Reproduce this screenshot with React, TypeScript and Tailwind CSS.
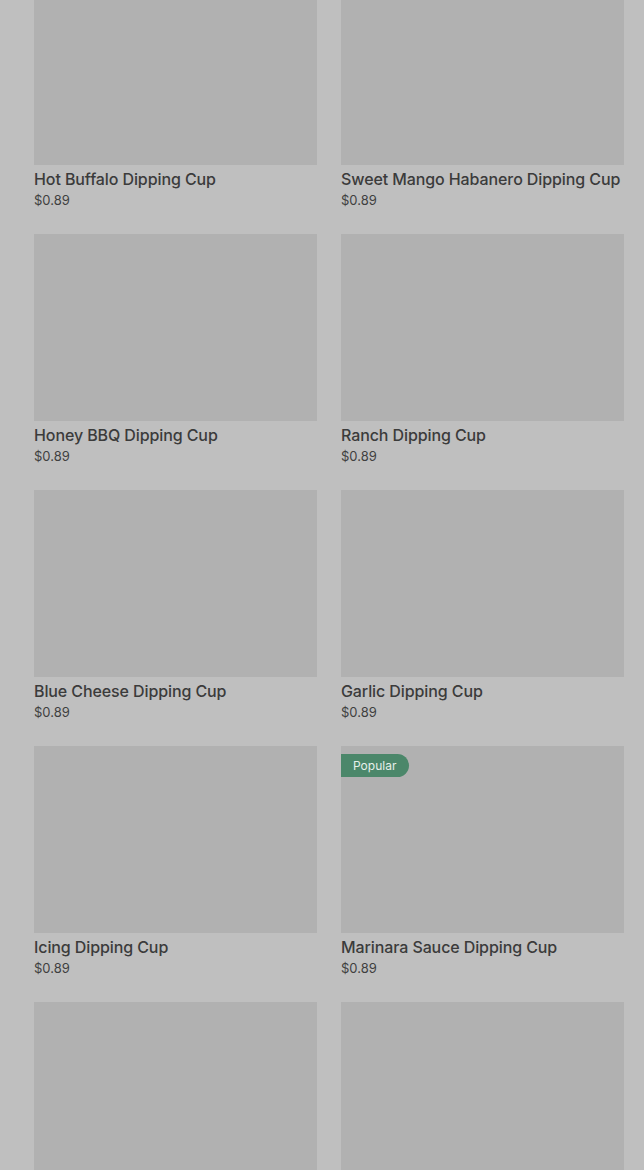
import React from "react";

const items: { name: string; popular?: boolean }[] = [
  { name: "Hot Buffalo Dipping Cup" },
  { name: "Sweet Mango Habanero Dipping Cup" },
  { name: "Honey BBQ Dipping Cup" },
  { name: "Ranch Dipping Cup" },
  { name: "Blue Cheese Dipping Cup" },
  { name: "Garlic Dipping Cup" },
  { name: "Icing Dipping Cup" },
  { name: "Marinara Sauce Dipping Cup", popular: true },
  { name: "" },
  { name: "" },
];

export default function App() {
  return (
    <div
      className="w-[644px] h-[1170px] overflow-hidden bg-[#bfbfbf]"
      style={{ fontFamily: "Inter, 'Noto Sans', sans-serif" }}
    >
      <div className="mt-[-22px] pl-[34px] pr-[20px] grid grid-cols-2 gap-x-[24px]">
        {items.map((it, i) => (
          <div key={i} className="h-[256px]">
            <div className="relative h-[187px] bg-[#b1b1b1]">
              {it.popular && (
                <div className="absolute left-0 top-[8px] h-[23px] w-[68px] rounded-r-full bg-[#4b876a] flex items-center pl-[12px] text-[12px] text-[#e6efe9]">
                  Popular
                </div>
              )}
            </div>
            {it.name && (
              <>
                <div className="mt-[4px] h-[20px] leading-[20px] text-[16px] tracking-[-0.1px] font-medium text-[#3b3b3b] whitespace-nowrap">
                  {it.name}
                </div>
                <div className="mt-[2px] h-[18px] leading-[18px] text-[13px] text-[#3f3f3f]">
                  $0.89
                </div>
              </>
            )}
          </div>
        ))}
      </div>
    </div>
  );
}
